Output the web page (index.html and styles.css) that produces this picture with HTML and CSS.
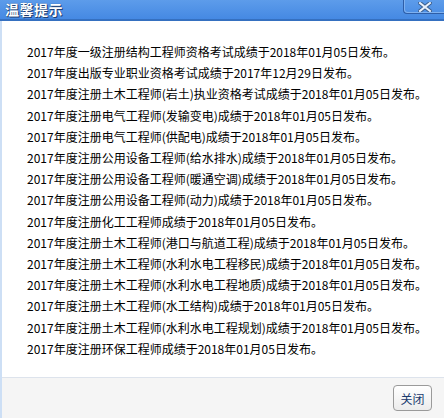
FILE: index.html
```html
<!DOCTYPE html>
<html lang="zh-CN">
<head>
<meta charset="utf-8">
<title>温馨提示</title>
<link rel="stylesheet" href="styles.css">
</head>
<body>
<div class="dialog">
  <div class="titlebar">
    <span class="title">温馨提示</span>
    <span class="close-x">
      <svg width="14" height="10" viewBox="0 0 14 10"><path d="M2 1 L12 9 M12 1 L2 9" stroke="#3b5f8f" stroke-width="4" stroke-linecap="square"/><path d="M2 1 L12 9 M12 1 L2 9" stroke="#e8f0fb" stroke-width="2" stroke-linecap="square"/></svg>
    </span>
  </div>
  <div class="content">
    <p>2017年度一级注册结构工程师资格考试成绩于2018年01月05日发布。</p>
    <p>2017年度出版专业职业资格考试成绩于2017年12月29日发布。</p>
    <p>2017年度注册土木工程师(岩土)执业资格考试成绩于2018年01月05日发布。</p>
    <p>2017年度注册电气工程师(发输变电)成绩于2018年01月05日发布。</p>
    <p>2017年度注册电气工程师(供配电)成绩于2018年01月05日发布。</p>
    <p>2017年度注册公用设备工程师(给水排水)成绩于2018年01月05日发布。</p>
    <p>2017年度注册公用设备工程师(暖通空调)成绩于2018年01月05日发布。</p>
    <p>2017年度注册公用设备工程师(动力)成绩于2018年01月05日发布。</p>
    <p>2017年度注册化工工程师成绩于2018年01月05日发布。</p>
    <p>2017年度注册土木工程师(港口与航道工程)成绩于2018年01月05日发布。</p>
    <p>2017年度注册土木工程师(水利水电工程移民)成绩于2018年01月05日发布。</p>
    <p>2017年度注册土木工程师(水利水电工程地质)成绩于2018年01月05日发布。</p>
    <p>2017年度注册土木工程师(水工结构)成绩于2018年01月05日发布。</p>
    <p>2017年度注册土木工程师(水利水电工程规划)成绩于2018年01月05日发布。</p>
    <p>2017年度注册环保工程师成绩于2018年01月05日发布。</p>
  </div>
  <div class="footer">
    <button class="btn">关闭</button>
  </div>
</div>
</body>
</html>
```

FILE: styles.css
```css
html, body {
  margin: 0;
  padding: 0;
}
body {
  width: 444px;
  height: 418px;
  overflow: hidden;
  background: #fff;
  font-family: "Noto Sans CJK SC", "Liberation Sans", sans-serif;
}
.dialog {
  width: 444px;
  height: 418px;
  display: flex;
  flex-direction: column;
  box-sizing: border-box;
  border-left: 2px solid #cddff5;
}
.titlebar {
  height: 19px;
  margin-left: -2px;
  background: linear-gradient(#5d9cea, #4589e3);
  border-bottom: 2px solid #3570c0;
  display: flex;
  align-items: center;
  justify-content: space-between;
  position: relative;
}
.title {
  color: #fff;
  font-weight: bold;
  font-size: 14px;
  line-height: 19px;
  padding-left: 5px;
  letter-spacing: 0.5px;
  text-shadow: 1px 1px 0 #1e3f73, 0 0 1px #1e3f73;
}
.close-x {
  width: 41px;
  height: 14px;
  align-self: flex-start;
  box-sizing: border-box;
  border-left: 1px solid #2e5ea8;
  border-bottom: 1px solid #2e5ea8;
  border-bottom-left-radius: 4px;
  box-shadow: inset 1px -1px 0 #7eb1f0;
  display: flex;
  align-items: center;
  justify-content: center;
  padding-left: 2px;
}
.close-x svg {
  display: block;
}
.content {
  flex: 1;
  padding: 20px 0 0 25px;
  font-size: 12px;
  color: #000;
}
.content p {
  margin: 0;
  line-height: 21.2px;
  white-space: nowrap;
}
.footer {
  height: 40px;
  background: #f5f5f5;
  border-top: 1px solid #dde3ec;
  display: flex;
  justify-content: flex-end;
  align-items: center;
  padding-right: 12px;
}
.btn {
  width: 39px;
  height: 26px;
  padding: 0;
  font-family: "Noto Sans CJK SC", sans-serif;
  font-size: 12px;
  color: #1a3a6e;
  background: linear-gradient(#ffffff, #ececec);
  border: 1px solid #9a9a9a;
  border-radius: 4px;
}
```
